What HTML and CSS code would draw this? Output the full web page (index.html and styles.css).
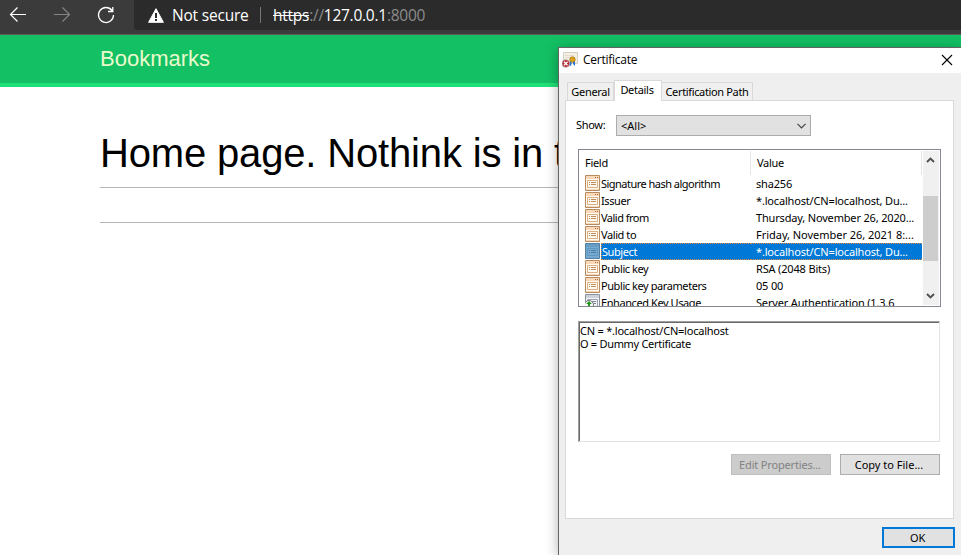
FILE: index.html
```
<!DOCTYPE html>
<html lang="en">
<head>
<meta charset="utf-8">
<title>Bookmarks</title>
<link rel="stylesheet" href="styles.css">
</head>
<body>
<svg class="defs" width="0" height="0">
  <defs>
    <symbol id="field" viewBox="0 0 16 16">
      <path fill="#fffaf2" stroke="#b88a60" d="M.5.5h14v15H.5z"/>
      <path fill="#fbd9b8" d="M1 1h13v3H1z"/>
      <path fill="#a66b36" d="M10 2h1v1h-1zM12 2h1v1h-1z"/>
      <path fill="none" stroke="#dcae80" d="M2.500 5.500h10v7h-10z"/>
      <path fill="#c08c5a" d="M4 7h1v1H4zM6 7h5v1H6zM4 9h1v1H4zM6 9h5v1H6z"/>
      <path fill="#f6d9bb" d="M1 14h13v1H1z"/>
    </symbol>
    <symbol id="field-selected" viewBox="0 0 16 16">
      <path fill="#78a9ce" stroke="#557f9e" d="M.5.5h14v15H.5z"/>
      <path fill="#669dc7" d="M1 1h13v3H1z"/>
      <path fill="none" stroke="#5c98c3" d="M2.500 5.500h10v7h-10z"/>
      <path fill="#4a7da5" d="M4 7h1v1H4zM6 7h5v1H6zM4 9h1v1H4zM6 9h5v1H6z"/>
    </symbol>
    <symbol id="extension" viewBox="0 0 16 16">
      <path fill="#f3f5f8" stroke="#8b929e" d="M.5.5h14v15H.5z"/>
      <path fill="#ccd2dc" d="M1 1h13v3H1z"/>
      <path fill="none" stroke="#9aa3b1" d="M2.500 5.500h10v7h-10z"/>
      <path fill="#7a8392" d="M7 7h4v1H7zM7 9h4v1H7z"/>
      <circle cx="4" cy="11" r="4.500" fill="#fff" stroke="#777"/>
      <path fill="#24951f" d="M4 7l3 3H5v4H3v-4H1z"/>
    </symbol>
  </defs>
</svg>

<header class="chrome">
  <svg class="nav-icons" width="134" height="30" fill="none">
    <path stroke="#fff" stroke-width="1.200" d="M26 14.500H10.500M17.500 7.500l-7 7 7 7"/>
    <path stroke="#858585" stroke-width="1.200" d="M54 14.500h15.500M62.500 7.500l7 7-7 7"/>
    <path stroke="#fff" stroke-width="1.300" d="M113.500 15a7.500 7.500 0 1 1-1.500-4.500M112.800 7v4.500H108"/>
  </svg>
  <div class="address">
    <svg class="warning" width="16" height="15" viewBox="0 0 16 15">
      <path fill="#fff" stroke="#fff" stroke-linejoin="round" d="M8 .7L15.400 14.300H.6z"/>
      <path fill="#2b2b2b" d="M7 5h2v5H7zM7 11h2v2H7z"/>
    </svg>
    <span class="status">Not secure</span>
    <span class="divider"></span>
    <span class="url"><s>https</s>://<b>127.0.0.1</b>:8000</span>
  </div>
</header>

<nav class="site-nav">Bookmarks</nav>
<main class="page">
  <h1>Home page. Nothink is in t</h1>
  <hr>
  <hr>
</main>

<section class="dialog">
  <div class="titlebar">
    <svg width="16" height="16" viewBox="0 0 16 16">
      <path fill="#f3efe3" stroke="#d6cfc2" d="M1.500.5h14v11h-14z"/>
      <path fill="#e2dccf" d="M3 3h9v1H3zM3 5h6v1H3z"/>
      <path fill="#2675de" d="M8 9h2l-1 5-2-1zM11 9h2v5l-2-2z"/>
      <circle cx="10.500" cy="7.500" r="2.700" fill="#d9a21f" stroke="#a97310" stroke-width=".7"/>
      <circle cx="3.800" cy="11.500" r="3.800" fill="#bd2932" stroke="#b7a4a4" stroke-width=".8"/>
      <path stroke="#fff" stroke-width="1.300" d="M2 9.800l3.500 3.500m0-3.500L2 13.300"/>
    </svg>
    <span class="title">Certificate</span>
    <svg class="close" width="12" height="12"><path stroke="#000" stroke-width="1.100" d="M1 1l10 10M11 1L1 11"/></svg>
  </div>
  <div class="tabs">
    <span class="tab general">General</span>
    <span class="tab active">Details</span>
    <span class="tab path">Certification Path</span>
  </div>
  <div class="panel">
    <div class="show">
      <label>Show:</label>
      <div class="select"><span>&lt;All&gt;</span>
        <svg width="9" height="6" fill="none"><path stroke="#444" stroke-width="1.200" d="M.5.8l4 4 4-4"/></svg>
      </div>
    </div>
    <div class="list">
      <div class="rows">
        <div class="head"><span class="name">Field</span><span class="value">Value</span></div>
        <div class="row"><svg><use href="#field"/></svg><span class="name tight">Signature hash algorithm</span><span class="value">sha256</span></div>
        <div class="row"><svg><use href="#field"/></svg><span class="name">Issuer</span><span class="value">*.localhost/CN=localhost, Du...</span></div>
        <div class="row"><svg><use href="#field"/></svg><span class="name tight">Valid from</span><span class="value">Thursday, November 26, 2020...</span></div>
        <div class="row"><svg><use href="#field"/></svg><span class="name">Valid to</span><span class="value wide">Friday, November 26, 2021 8:...</span></div>
        <div class="row selected"><svg><use href="#field-selected"/></svg><span class="name">Subject</span><span class="value">*.localhost/CN=localhost, Du...</span></div>
        <div class="row"><svg><use href="#field"/></svg><span class="name">Public key</span><span class="value">RSA (2048 Bits)</span></div>
        <div class="row"><svg><use href="#field"/></svg><span class="name">Public key parameters</span><span class="value">05 00</span></div>
        <div class="row"><svg><use href="#extension"/></svg><span class="name">Enhanced Key Usage</span><span class="value">Server Authentication (1.3.6</span></div>
      </div>
      <div class="scrollbar">
        <svg width="9" height="6" fill="none"><path stroke="#505050" stroke-width="1.900" d="M1 5l3.500-3.500L8 5"/></svg>
        <div class="track"><div class="thumb"></div></div>
        <svg width="9" height="6" fill="none"><path stroke="#505050" stroke-width="1.900" d="M1 1l3.500 3.500L8 1"/></svg>
      </div>
    </div>
    <div class="detail"><div class="cn">CN = *.localhost/CN=localhost</div><div>O = Dummy Certificate</div></div>
    <div class="actions">
      <button class="edit" disabled>Edit Properties...</button>
      <button class="copy">Copy to File...</button>
    </div>
  </div>
  <div class="footer"><button class="ok">OK</button></div>
</section>
</body>
</html>
```
FILE: styles.css
```
* { box-sizing: border-box; }
body {
  margin: 0;
  height: 555px;
  position: relative;
  overflow: hidden;
  background: #fff;
  font-family: "Liberation Sans", Arial, sans-serif;
}
svg { display: block; flex: none; }
.defs { position: absolute; }

.chrome {
  display: flex;
  height: 35px;
  background: #3b3b3b;
  border-bottom: 1px solid #5c5c5c;
}
.address {
  display: flex;
  align-items: center;
  flex: 1;
  height: 30px;
  padding-left: 14px;
  background: #2b2b2b;
  border-bottom-left-radius: 4px;
  color: #fff;
  font: 15.5px/30px "Open Sans", sans-serif;
  white-space: pre;
}
.status { margin-left: 8px; width: 88px; letter-spacing: -.2px; }
.divider { width: 1px; height: 16px; background: #777; }
.url { margin-left: 12px; color: #8c8c8c; letter-spacing: -.26px; }
.url s { color: #fff; }
.url b { color: #fff; font-weight: 400; }

.site-nav {
  height: 52px;
  padding-left: 100px;
  background: #13c064;
  border-bottom: 4px solid #1fe077;
  color: #e9facb;
  font-size: 22px;
  line-height: 47px;
}
.page { padding: 43px 0 0 100px; }
h1 {
  margin: 0;
  height: 57px;
  font-size: 40px;
  font-weight: 400;
  letter-spacing: -.16px;
  line-height: 46px;
  white-space: nowrap;
}
hr { margin: 0 0 34px; border: 0; border-top: 1px solid #b5b5b5; }

.dialog {
  position: absolute;
  left: 558px;
  top: 47px;
  width: 403px;
  height: 508px;
  border: solid #646464;
  border-width: 1px 0 0 1px;
  background: #efefef;
  box-shadow: 0 2px 12px rgba(0, 0, 0, .3);
  font: 11px/13px "Noto Sans", sans-serif;
  letter-spacing: -.3px;
  color: #000;
  white-space: nowrap;
}
.titlebar {
  display: flex;
  align-items: center;
  height: 25px;
  padding: 0 8px 1px 3px;
  background: #fff;
}
.title { margin: 0 0 0 5px; font: 12px/24px "Open Sans", sans-serif; letter-spacing: -.25px; }
.close { margin-left: auto; }
.tabs {
  display: flex;
  align-items: flex-end;
  height: 27px;
  padding-left: 8px;
}
.tab {
  height: 18px;
  padding-top: 2px;
  border: 1px solid #d9d9d9;
  border-bottom: 0;
  background: #f0f0f0;
  text-align: center;
}
.general { width: 47px; }
.path { width: 91px; border-left: 0; letter-spacing: -.35px; }
.active {
  width: 48px;
  height: 21px;
  margin-bottom: -1px;
  padding-right: 2px;
  position: relative;
  background: #fff;
}
.panel {
  width: 389px;
  height: 419px;
  margin-left: 6px;
  padding: 14px 0 0 12px;
  border: 1px solid #d9d9d9;
  background: #fff;
}
.show { display: flex; height: 34px; }
label { width: 38px; margin-left: -2px; line-height: 20px; }
.select {
  display: flex;
  align-items: center;
  justify-content: space-between;
  width: 195px;
  height: 21px;
  margin-left: 2px;
  padding: 0 4px;
  border: 1px solid #acacac;
  background: #e1e1e1;
}
.select span { letter-spacing: 0; }
.list {
  display: flex;
  width: 363px;
  height: 158px;
  border: 1px solid #828790;
  overflow: hidden;
}
.rows { width: 343px; }
.head { display: flex; height: 25px; padding: 1px 0 0; }
.head span { border-right: 1px solid #e5e5e5; line-height: 24px; }
.head .name { width: 172px; padding-left: 6px; }
.head .value { width: 171px; padding-left: 6px; }
.row { display: flex; height: 17px; padding-left: 6px; line-height: 18px; }
.row svg { width: 16px; height: 16px; }
.row .name { width: 150px; letter-spacing: -.42px; }
.row .name.tight { letter-spacing: -.52px; }
.row .value { width: 171px; padding-left: 5px; letter-spacing: -.17px; }
.row .value.wide { letter-spacing: -.03px; }
.row.selected span { background: #0078d7; color: #fff; border: dotted #e28a38; border-width: 1px 0; line-height: 16px; }
.row.selected .name { border-left-width: 1px; }
.scrollbar {
  display: flex;
  flex-direction: column;
  align-items: center;
  width: 16px;
  margin: 1px 0 1px 1px;
  padding: 6px 1px 6px 0;
  background: #f0f0f0;
}
.track { flex: 1; width: 15px; padding-top: 33px; }
.thumb { height: 65px; background: #cdcdcd; }
.detail {
  width: 362px;
  height: 121px;
  margin-top: 14px;
  padding: 2px 1px;
  border: 1px solid;
  border-color: #a0a0a0 #e3e3e3 #e3e3e3 #a0a0a0;
  box-shadow: inset 1px 1px #696969;
}
.cn { letter-spacing: -.22px; }
.actions { display: flex; gap: 9px; margin: 12px 0 0 153px; }
button {
  width: 100px;
  height: 21px;
  padding: 0 2px 0 0;
  border: 1px solid #adadad;
  background: #e1e1e1;
  color: #000;
  font: inherit;
  letter-spacing: inherit;
}
button:disabled { background: #ccc; border-color: #bfbfbf; color: #838383; }
.edit { letter-spacing: -.17px; }
.copy { letter-spacing: 0; }
.footer { display: flex; justify-content: flex-end; padding: 8px 6px 0 0; }
.ok { width: 73px; border: 2px solid #0078d7; }
```
